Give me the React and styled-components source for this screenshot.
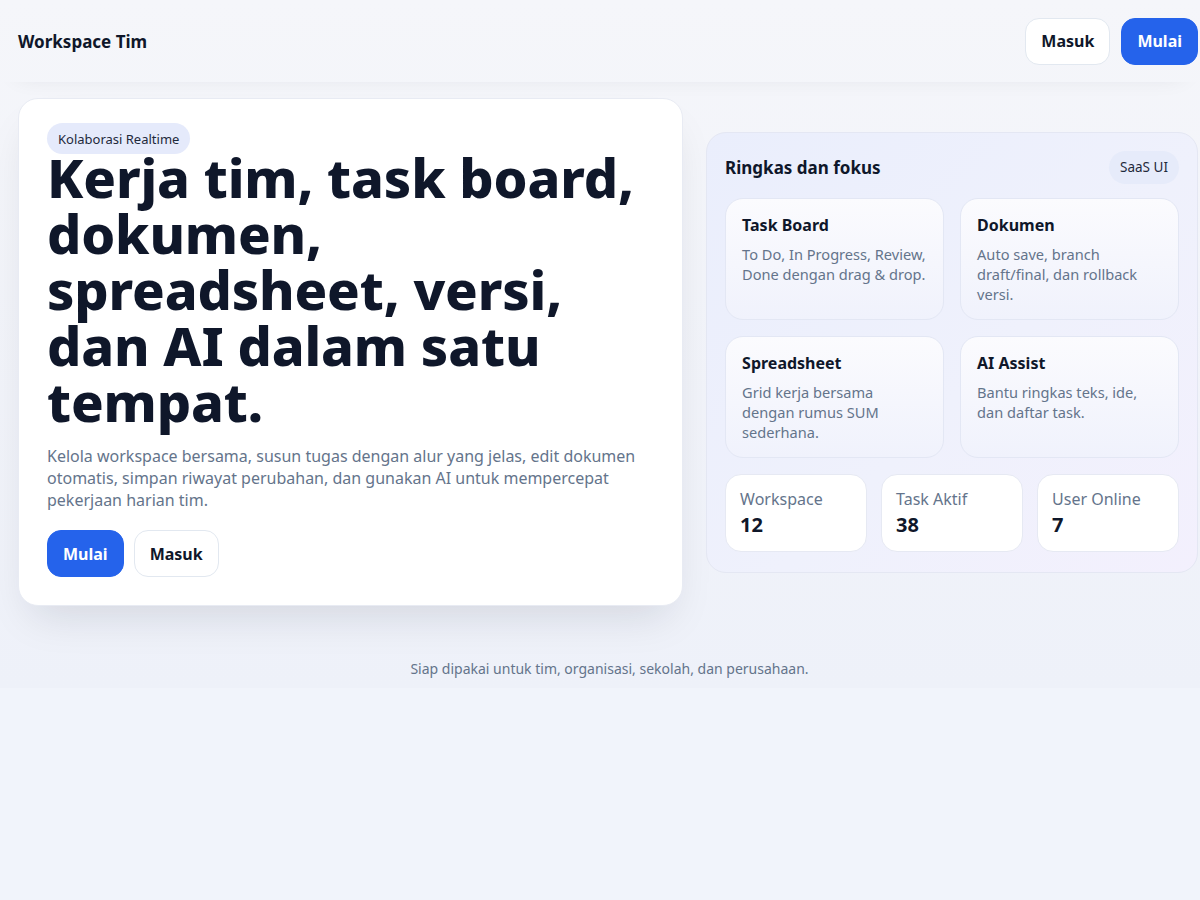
import React from 'react';
import styled, { createGlobalStyle } from 'styled-components';

const GlobalStyle = createGlobalStyle`
  * { box-sizing: border-box; }
  html, body {
    margin: 0;
    padding: 0;
    background: #f1f4fb;
    font-family: 'Noto Sans', 'Open Sans', sans-serif;
    color: #0f172a;
  }
`;

const Page = styled.div`
  min-height: 688px;
  background: linear-gradient(180deg, #f5f6fa 0%, #eef1f9 100%);
`;

const Header = styled.header`
  height: 82px;
  display: flex;
  align-items: center;
  justify-content: space-between;
  padding: 0 2px 0 18px;
  box-shadow: 0 10px 24px -18px rgba(15, 23, 42, 0.12);
`;

const Brand = styled.div`
  font-size: 17px;
  font-weight: 700;
  color: #0f172a;
`;

const Actions = styled.div`
  display: flex;
  gap: 11px;
`;

const Button = styled.button`
  font-family: inherit;
  font-size: 16px;
  font-weight: 700;
  height: 47px;
  padding: 0 15px;
  border-radius: 14px;
  cursor: pointer;
  border: 1px solid ${p => (p.$primary ? '#2563eb' : '#e2e8f0')};
  background: ${p => (p.$primary ? '#2563eb' : '#ffffff')};
  color: ${p => (p.$primary ? '#ffffff' : '#0f172a')};
`;

const Main = styled.main`
  display: grid;
  grid-template-columns: 1.352fr 1fr;
  gap: 23px;
  align-items: center;
  padding: 16px 2px 0 18px;
`;

const Hero = styled.section`
  background: #ffffff;
  border: 1px solid #e8ebf3;
  border-radius: 20px;
  padding: 24px 28px 28px;
  box-shadow: 0 22px 44px -14px rgba(15, 23, 42, 0.13);
`;

const Badge = styled.span`
  display: inline-flex;
  align-items: center;
  height: 31px;
  padding: 0 11px;
  border-radius: 999px;
  background: #e5eafb;
  font-size: 13px;
  color: #1e293b;
`;

const Headline = styled.h1`
  margin: -5px 0 16px;
  font-size: 54px;
  line-height: 56px;
  font-weight: 800;
  letter-spacing: -0.15px;
  color: #0f172a;
`;

const Lead = styled.p`
  margin: 0 0 19px;
  font-size: 16px;
  line-height: 22px;
  color: #64748b;
`;

const HeroActions = styled.div`
  display: flex;
  gap: 10px;
`;

const Panel = styled.aside`
  border: 1px solid #e4e7f3;
  border-radius: 20px;
  padding: 18px 18px 20px;
  background: linear-gradient(135deg, #eaeefc 0%, #eff1fc 55%, #f3f0fd 100%);
`;

const PanelHead = styled.div`
  display: flex;
  align-items: center;
  justify-content: space-between;
  margin-bottom: 14px;
`;

const PanelTitle = styled.h2`
  margin: 0;
  font-size: 17px;
  font-weight: 700;
  color: #0f172a;
`;

const Pill = styled.span`
  display: inline-flex;
  align-items: center;
  height: 33px;
  padding: 0 11px;
  border-radius: 999px;
  background: #e6ebfa;
  font-size: 13.5px;
  color: #1e293b;
`;

const FeatureGrid = styled.div`
  display: grid;
  grid-template-columns: 1fr 1fr;
  gap: 16px;
`;

const Feature = styled.div`
  height: 122px;
  border: 1px solid #e3e7f4;
  border-radius: 18px;
  padding: 15px 16px;
  background: linear-gradient(180deg, #fbfbfe 0%, #f0f2fc 100%);
`;

const FeatureTitle = styled.h3`
  margin: 0 0 8px;
  font-size: 16px;
  font-weight: 700;
  color: #0f172a;
`;

const FeatureText = styled.p`
  margin: 0;
  font-size: 14.6px;
  line-height: 20px;
  color: #64748b;
`;

const StatGrid = styled.div`
  display: grid;
  grid-template-columns: repeat(3, 1fr);
  gap: 14px;
  margin-top: 16px;
`;

const Stat = styled.div`
  height: 78px;
  background: #ffffff;
  border: 1px solid #e6e9f3;
  border-radius: 16px;
  padding: 13px 14px;
`;

const StatLabel = styled.div`
  font-size: 16px;
  line-height: 22px;
  color: #64748b;
`;

const StatValue = styled.div`
  font-size: 20px;
  line-height: 30px;
  font-weight: 700;
  color: #0f172a;
`;

const Footer = styled.footer`
  padding: 53px 0 0 19px;
  text-align: center;
  font-size: 14px;
  color: #64748b;
`;

const features = [
  { title: 'Task Board', text: 'To Do, In Progress, Review, Done dengan drag & drop.' },
  { title: 'Dokumen', text: 'Auto save, branch draft/final, dan rollback versi.' },
  { title: 'Spreadsheet', text: 'Grid kerja bersama dengan rumus SUM sederhana.' },
  { title: 'AI Assist', text: 'Bantu ringkas teks, ide, dan daftar task.' },
];

const stats = [
  { label: 'Workspace', value: 12 },
  { label: 'Task Aktif', value: 38 },
  { label: 'User Online', value: 7 },
];

export default function App() {
  return (
    <>
      <GlobalStyle />
      <Page>
        <Header>
          <Brand>Workspace Tim</Brand>
          <Actions>
            <Button>Masuk</Button>
            <Button $primary>Mulai</Button>
          </Actions>
        </Header>
        <Main>
          <Hero>
            <Badge>Kolaborasi Realtime</Badge>
            <Headline>
              Kerja tim, task board, dokumen, spreadsheet, versi, dan AI dalam satu tempat.
            </Headline>
            <Lead>
              Kelola workspace bersama, susun tugas dengan alur yang jelas, edit dokumen
              otomatis, simpan riwayat perubahan, dan gunakan AI untuk mempercepat
              pekerjaan harian tim.
            </Lead>
            <HeroActions>
              <Button $primary>Mulai</Button>
              <Button>Masuk</Button>
            </HeroActions>
          </Hero>
          <Panel>
            <PanelHead>
              <PanelTitle>Ringkas dan fokus</PanelTitle>
              <Pill>SaaS UI</Pill>
            </PanelHead>
            <FeatureGrid>
              {features.map(f => (
                <Feature key={f.title}>
                  <FeatureTitle>{f.title}</FeatureTitle>
                  <FeatureText>{f.text}</FeatureText>
                </Feature>
              ))}
            </FeatureGrid>
            <StatGrid>
              {stats.map(s => (
                <Stat key={s.label}>
                  <StatLabel>{s.label}</StatLabel>
                  <StatValue>{s.value}</StatValue>
                </Stat>
              ))}
            </StatGrid>
          </Panel>
        </Main>
        <Footer>Siap dipakai untuk tim, organisasi, sekolah, dan perusahaan.</Footer>
      </Page>
    </>
  );
}
